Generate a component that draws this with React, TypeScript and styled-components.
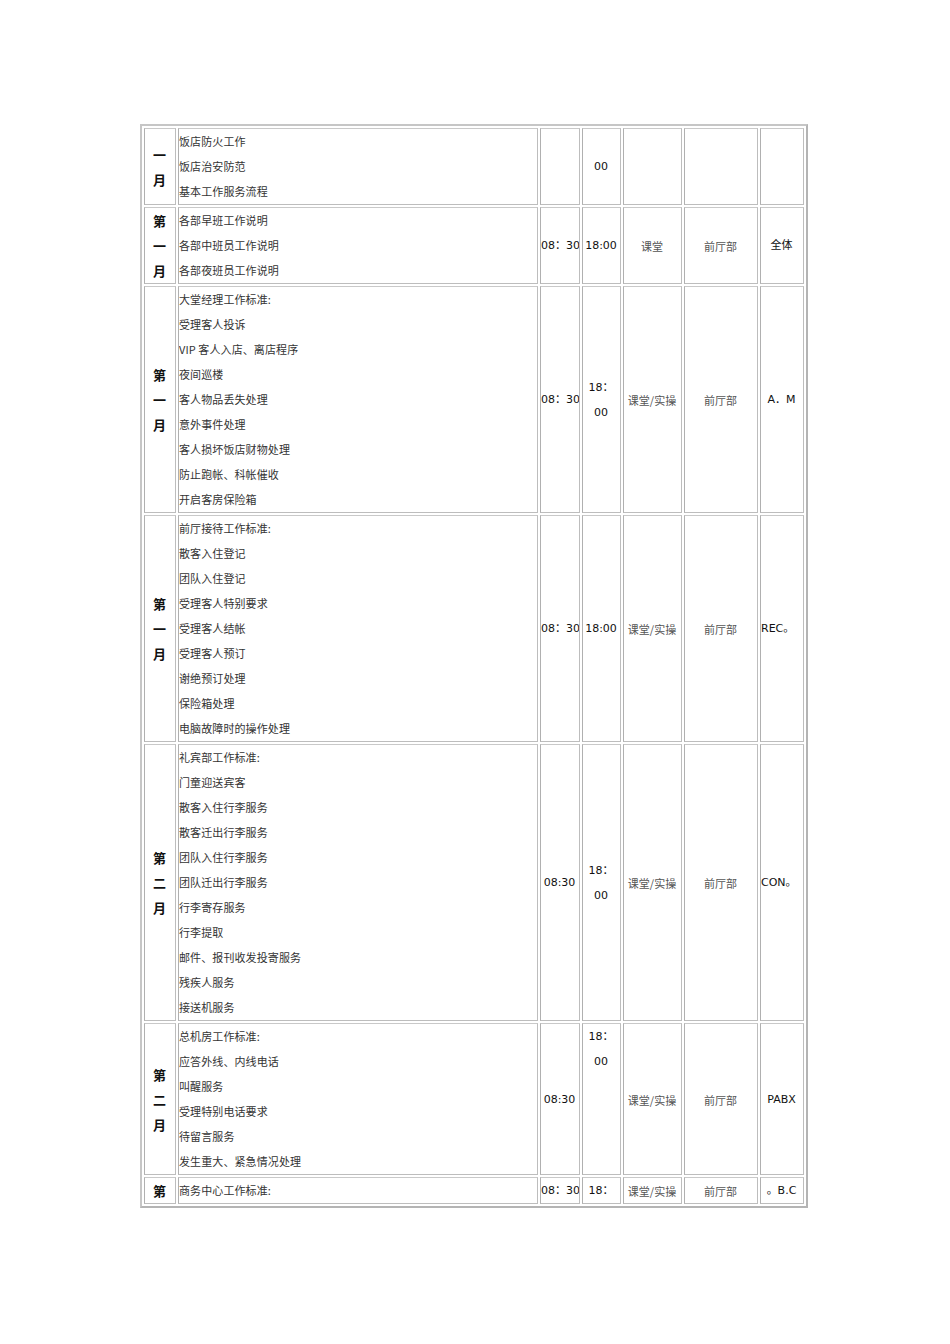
import styled, { createGlobalStyle } from 'styled-components';

type Align = 'left' | 'center';
type VAlign = 'top' | 'middle';

type Cell = {
  lines: string[];
  align?: Align;
  valign?: VAlign;
};

type Row = {
  month: string[];
  items: string[];
  start: Cell;
  end: Cell;
  kind: string;
  dept: string;
  who: Cell;
};

const rows: Row[] = [
  {
    month: ['一', '月'],
    items: ['饭店防火工作', '饭店治安防范', '基本工作服务流程'],
    start: { lines: [] },
    end: { lines: ['00'], align: 'center' },
    kind: '',
    dept: '',
    who: { lines: [] }
  },
  {
    month: ['第', '一', '月'],
    items: ['各部早班工作说明', '各部中班员工作说明', '各部夜班员工作说明'],
    start: { lines: ['08：30'] },
    end: { lines: ['18:00'], align: 'center' },
    kind: '课堂',
    dept: '前厅部',
    who: { lines: ['全体'], align: 'center' }
  },
  {
    month: ['第', '一', '月'],
    items: [
      '大堂经理工作标准:',
      '受理客人投诉',
      'VIP 客人入店、离店程序',
      '夜间巡楼',
      '客人物品丢失处理',
      '意外事件处理',
      '客人损坏饭店财物处理',
      '防止跑帐、科帐催收',
      '开启客房保险箱'
    ],
    start: { lines: ['08：30'] },
    end: { lines: ['18：', '00'], align: 'center' },
    kind: '课堂/实操',
    dept: '前厅部',
    who: { lines: ['A．M'], align: 'center' }
  },
  {
    month: ['第', '一', '月'],
    items: [
      '前厅接待工作标准:',
      '散客入住登记',
      '团队入住登记',
      '受理客人特别要求',
      '受理客人结帐',
      '受理客人预订',
      '谢绝预订处理',
      '保险箱处理',
      '电脑故障时的操作处理'
    ],
    start: { lines: ['08：30'] },
    end: { lines: ['18:00'], align: 'center' },
    kind: '课堂/实操',
    dept: '前厅部',
    who: { lines: ['REC。'] }
  },
  {
    month: ['第', '二', '月'],
    items: [
      '礼宾部工作标准:',
      '门童迎送宾客',
      '散客入住行李服务',
      '散客迁出行李服务',
      '团队入住行李服务',
      '团队迁出行李服务',
      '行李寄存服务',
      '行李提取',
      '邮件、报刊收发投寄服务',
      '残疾人服务',
      '接送机服务'
    ],
    start: { lines: ['08:30'], align: 'center' },
    end: { lines: ['18：', '00'], align: 'center' },
    kind: '课堂/实操',
    dept: '前厅部',
    who: { lines: ['CON。'] }
  },
  {
    month: ['第', '二', '月'],
    items: [
      '总机房工作标准:',
      '应答外线、内线电话',
      '叫醒服务',
      '受理特别电话要求',
      '待留言服务',
      '发生重大、紧急情况处理'
    ],
    start: { lines: ['08:30'], align: 'center' },
    end: { lines: ['18：', '00'], align: 'center', valign: 'top' },
    kind: '课堂/实操',
    dept: '前厅部',
    who: { lines: ['PABX'], align: 'center' }
  },
  {
    month: ['第'],
    items: ['商务中心工作标准:'],
    start: { lines: ['08：30'] },
    end: { lines: ['18：'], align: 'center' },
    kind: '课堂/实操',
    dept: '前厅部',
    who: { lines: ['。B.C'], align: 'center' }
  }
];

const GlobalStyle = createGlobalStyle`
  body {
    margin: 0;
    background: #ffffff;
    font-family: "DejaVu Sans", "Noto Sans CJK SC", sans-serif;
  }
`;

const Page = styled.div`
  padding: 124px 0 0 140px;
  height: 1344px;
  box-sizing: border-box;
`;

const Schedule = styled.table`
  width: 668px;
  table-layout: fixed;
  border-collapse: separate;
  border-spacing: 2px;
  border: 2px solid #c6c6c6;
  border-right-color: #b4b4b4;
  border-bottom-color: #b4b4b4;
`;

const Col = styled.col<{ $w: number }>`
  width: ${(p) => p.$w}px;
`;

const Td = styled.td<{ $align?: Align; $valign?: VAlign }>`
  border: 1px solid #bdbdbd;
  border-top-color: #c9c9c9;
  border-left-color: #b0b0b0;
  padding: 0 1px 0 0;
  text-align: ${(p) => p.$align ?? 'left'};
  vertical-align: ${(p) => p.$valign ?? 'middle'};
  overflow: hidden;
  white-space: nowrap;
`;

const Line = styled.div`
  height: 25px;
  line-height: 25px;
`;

const MonthLine = styled(Line)`
  font-family: "Noto Sans CJK SC", sans-serif;
  font-size: 13px;
  font-weight: 700;
  color: #111;
  text-align: center;
`;

const ItemLine = styled(Line)`
  font-family: "Noto Sans CJK SC", sans-serif;
  font-size: 11px;
  color: #333;
  letter-spacing: 0.1px;
`;

const NumLine = styled(Line)`
  font-family: "DejaVu Sans", "Noto Sans CJK SC", sans-serif;
  font-size: 11px;
  color: #111;
`;

const GrayText = styled.span`
  font-family: "Noto Sans CJK SC", sans-serif;
  font-size: 11px;
  color: #555;
`;

const ValueCell = ({ cell }: { cell: Cell }) => (
  <Td $align={cell.align} $valign={cell.valign}>
    {cell.lines.map((l, i) => (
      <NumLine key={i}>{l}</NumLine>
    ))}
  </Td>
);

const App = () => {
  return (
    <Page>
      <GlobalStyle />
      <Schedule>
        <colgroup>
          <Col $w={32} />
          <Col $w={360} />
          <Col $w={40} />
          <Col $w={39} />
          <Col $w={59} />
          <Col $w={74} />
          <Col $w={44} />
        </colgroup>
        <tbody>
          {rows.map((r, i) => (
            <tr key={i}>
              <Td $align="center">
                {r.month.map((m, j) => (
                  <MonthLine key={j}>{m}</MonthLine>
                ))}
              </Td>
              <Td>
                {r.items.map((t, j) => (
                  <ItemLine key={j}>{t}</ItemLine>
                ))}
              </Td>
              <ValueCell cell={r.start} />
              <ValueCell cell={r.end} />
              <Td $align="center">
                <GrayText>{r.kind}</GrayText>
              </Td>
              <Td $align="center">
                <GrayText>{r.dept}</GrayText>
              </Td>
              <ValueCell cell={r.who} />
            </tr>
          ))}
        </tbody>
      </Schedule>
    </Page>
  );
};

export default App;
